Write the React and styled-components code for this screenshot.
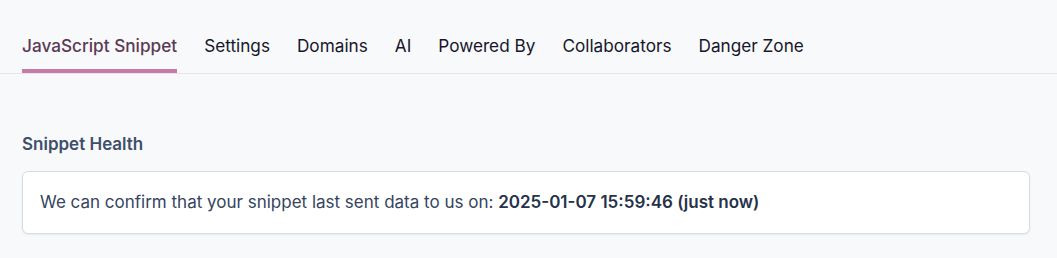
import React from "react";
import styled, { createGlobalStyle } from "styled-components";

const Global = createGlobalStyle`
  body {
    margin: 0;
    background: #f8f9fb;
    font-family: Inter, "Open Sans", sans-serif;
  }
`;

const Page = styled.div`
  width: 1057px;
  height: 258px;
  background: #f8f9fb;
`;

const Tabs = styled.nav`
  display: flex;
  gap: 27px;
  padding: 0 22px;
  border-bottom: 1px solid #ebe4ea;
`;

const Tab = styled.div`
  padding: 35px 0 12px;
  line-height: 22px;
  font-size: 17.2px;
  color: ${(p) => (p.$active ? "#5b3a55" : "#17162a")};
  font-weight: ${(p) => (p.$active ? 500 : 400)};
  border-bottom: 4px solid ${(p) => (p.$active ? "#c47da6" : "transparent")};
`;

const Section = styled.section`
  padding: 59px 27px 0 22px;
`;

const Heading = styled.h3`
  margin: 0 0 16px;
  font-size: 17px;
  line-height: 22px;
  font-weight: 600;
  color: #3e4f6b;
`;

const Card = styled.div`
  background: #fff;
  border: 1px solid #d4dce7;
  border-radius: 6px;
  box-shadow: 0 1px 2px rgba(30, 50, 80, 0.08);
  padding: 18px 17px 19px;
  font-size: 17px;
  line-height: 24px;
  color: #34445e;
`;

const Strong = styled.strong`
  font-weight: 600;
  color: #26324a;
`;

const tabs = ["JavaScript Snippet", "Settings", "Domains", "AI", "Powered By", "Collaborators", "Danger Zone"];

export default function App() {
  return (
    <Page>
      <Global />
      <Tabs>
        {tabs.map((t, i) => (
          <Tab key={t} $active={i === 0}>{t}</Tab>
        ))}
      </Tabs>
      <Section>
        <Heading>Snippet Health</Heading>
        <Card>
          We can confirm that your snippet last sent data to us on: <Strong>2025-01-07 15:59:46 (just now)</Strong>
        </Card>
      </Section>
    </Page>
  );
}
